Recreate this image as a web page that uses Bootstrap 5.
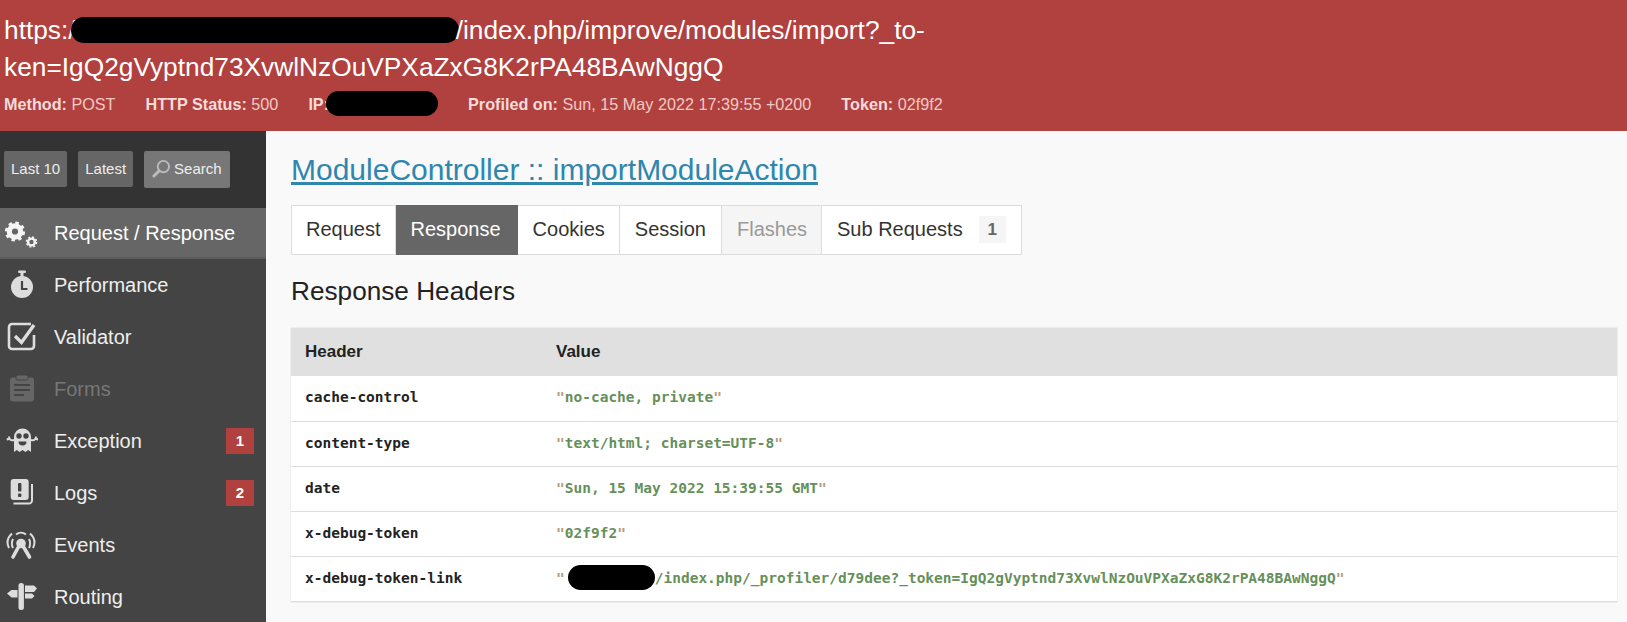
<!DOCTYPE html>
<html lang="en">
<head>
<meta charset="utf-8">
<title>Symfony Profiler</title>
<link href="https://cdn.jsdelivr.net/npm/bootstrap@5.3.0/dist/css/bootstrap.min.css" rel="stylesheet">
<style>
html,body{height:100%;overflow:hidden}
body{font-family:"Liberation Sans",Arial,sans-serif;background:#f9f9f9;color:#222}
.prof-head{background:#b0413e;height:131px;padding:12px 4px 0}
.prof-url{font-size:26.3px;line-height:37px;color:#fff;width:960px;margin:0;font-weight:400}
.prof-meta{font-size:16.2px;line-height:20px;color:#f2c9c7;margin-top:8px;gap:30px}
.prof-meta b{color:#f5dbda}
.blob{display:inline-block;background:#000;border-radius:14px;vertical-align:middle}
.blob-url{width:388px;height:26px;margin:-6px -3px -2px -5px}
.blob-ip{width:112px;height:25px;margin:-4px 0 0 -3px}
.blob-val{width:87px;height:25px;margin:-4px 0 -2px 3px}
.prof-body{height:491px}
.prof-side{width:266px;flex:0 0 266px;background:#444}
.side-top{background:#333;height:77px;padding:20px 4px 0;gap:11px}
.side-btn{background:#666;color:#eee;font-size:15px;line-height:20px;padding:8px 7px;height:36px;border-radius:2px;white-space:nowrap}
.side-btn.find{background:#777;padding:8px 8px;height:37px}
.side-btn svg{vertical-align:-4px;margin-right:3px}
.side-item{height:52px;color:#eee;font-size:20px;padding-left:4px}
.side-item svg{flex:0 0 34px;margin-right:16px}
.side-item.on{background:#666;border-bottom:2px solid #5c5c5c;color:#fff;height:51px}
.side-item.off{color:#777}
.side-num{background:#b0413e;color:#fff;font-weight:700;font-size:15px;width:28px;height:26px;margin:0 12px 0 auto;line-height:26px;text-align:center}
.prof-main{padding:21px 10px 0 25px;min-width:0}
.prof-title{font-size:30px;line-height:36px;font-weight:400;margin:0 0 17px}
.prof-title a{color:#2f86ae}
.tabbar{width:731px;height:50px;background:#fff;border:1px solid #ddd}
.tabbar span{font-size:20px;padding:0 15px;line-height:47px;color:#333;border-right:1px solid #ddd;white-space:nowrap}
.tabbar span.first{padding:0 14px}
.tabbar span.act{background:#666;color:#fff;margin:-1px 0;line-height:49px;height:50px;border-right:0;padding-right:17px}
.tabbar span.cook{padding-right:14px}
.tabbar span.dis{background:#f5f5f5;color:#999;padding-right:14px}
.tabbar span.last{border-right:0;flex:1}
.tabnum{display:inline-block;background:#f5f5f5;color:#666;font-weight:700;font-size:17px;line-height:27px;width:27px;text-align:center;margin-left:16px;vertical-align:1px}
.sect{font-size:26.2px;line-height:30px;font-weight:400;margin:21px 0 22px;color:#222}
.hdr-tbl{box-shadow:0 0 1px rgba(128,128,128,.5);font-size:14.5px}
.hdr-tbl th{background:#e0e0e0;font-size:17px;height:48px;padding:0 14px;vertical-align:middle;border:0;color:#222}
.hdr-tbl td{background:#fff;height:45px;padding:0 14px;vertical-align:middle;border-bottom:1px solid #ddd;font-family:"DejaVu Sans Mono","Liberation Mono",monospace;font-weight:700;white-space:nowrap;color:#222}
.hdr-tbl .k{width:251px}
.hdr-tbl td.v{color:#66905a}
.q{color:#b89a78}
</style>
</head>
<body>
<header class="prof-head">
  <h1 class="prof-url">https:/<span class="blob blob-url"></span>/index.php/improve/modules/import?_to-<br>ken=IgQ2gVyptnd73XvwlNzOuVPXaZxG8K2rPA48BAwNggQ</h1>
  <div class="prof-meta d-flex">
    <span><b>Method:</b> POST</span>
    <span><b>HTTP Status:</b> 500</span>
    <span><b>IP:</b><span class="blob blob-ip"></span></span>
    <span><b>Profiled on:</b> Sun, 15 May 2022 17:39:55 +0200</span>
    <span><b>Token:</b> 02f9f2</span>
  </div>
</header>
<div class="prof-body d-flex">
  <aside class="prof-side">
    <div class="side-top d-flex">
      <span class="side-btn">Last 10</span>
      <span class="side-btn">Latest</span>
      <span class="side-btn find"><svg width="19" height="19" viewBox="0 0 20 20" fill="none" stroke="#bbb" stroke-width="2"><circle cx="12" cy="8" r="6"/><path d="M7.500 12.500 2 18" stroke-width="3" stroke-linecap="round"/></svg>Search</span>
    </div>
    <div class="side-item on d-flex align-items-center">
      <svg width="34" height="34" viewBox="0 0 34 34" fill="none" stroke="#f5f5f5"><circle cx="11" cy="15.500" r="5.700" stroke-width="5.200"/><circle cx="11" cy="15.500" r="8.800" stroke-width="2.600" stroke-dasharray="3.460 3.460"/><circle cx="27.500" cy="26" r="3.400" stroke-width="2.400"/><circle cx="27.500" cy="26" r="5.100" stroke-width="1.400" stroke-dasharray="2 2"/></svg>
      Request / Response</div>
    <div class="side-item d-flex align-items-center">
      <svg width="34" height="34" viewBox="0 0 34 34"><circle cx="18" cy="19" r="11" fill="#ddd"/><rect x="14" y="2.500" width="8" height="2.600" rx="1.300" fill="#ddd"/><rect x="16.500" y="5" width="3" height="4" fill="#ddd"/><path d="M18 13v8h5.500" fill="none" stroke="#444" stroke-width="2.200"/></svg>
      Performance</div>
    <div class="side-item d-flex align-items-center">
      <svg width="34" height="34" viewBox="0 0 34 34" fill="none" stroke="#ddd"><path d="M27 4H8a3 3 0 0 0-3 3v19a3 3 0 0 0 3 3h19a3 3 0 0 0 3-3V15" stroke-width="2.600"/><path d="m11 16 6.500 6.500L30 5" stroke-width="3.400"/></svg>
      Validator</div>
    <div class="side-item off d-flex align-items-center">
      <svg width="34" height="34" viewBox="0 0 34 34"><rect x="6" y="5.500" width="24" height="24" rx="3" fill="#666"/><rect x="12" y="3" width="12" height="5" rx="1.500" fill="#666" stroke="#444"/><path d="M10 13h16M10 18h16M10 23h10" stroke="#444" stroke-width="2"/></svg>
      Forms</div>
    <div class="side-item d-flex align-items-center">
      <svg width="34" height="34" viewBox="0 0 34 34"><path d="M10 13a8.500 8.500 0 0 1 17 0v15l-2.800-2-2.800 2-2.900-2-2.900 2-2.800-2-2.800 2z" fill="#ddd"/><path d="M10 16c-3 1-5-.5-5-3.500M4.500 16 3 14.500M27 16c3 1 5-.5 5-3.500M32.500 16l1.500-1.500" fill="none" stroke="#ddd" stroke-width="2"/><circle cx="15" cy="12" r="2.700" fill="#444"/><circle cx="22" cy="12" r="2.700" fill="#444"/><path d="M14.500 17.500h8a4 4 0 0 1-8 0" fill="#444"/></svg>
      Exception<span class="side-num">1</span></div>
    <div class="side-item d-flex align-items-center">
      <svg width="34" height="34" viewBox="0 0 34 34"><rect x="6.700" y="3" width="18" height="21" rx="3" fill="#ddd"/><rect x="14" y="7" width="3.400" height="8.500" rx="1" fill="#444"/><rect x="14" y="17.500" width="3.400" height="3.400" rx="1" fill="#444"/><path d="M9.500 27.500H25a3 3 0 0 0 3-3V8" fill="none" stroke="#ddd" stroke-width="2"/></svg>
      Logs<span class="side-num">2</span></div>
    <div class="side-item d-flex align-items-center">
      <svg width="34" height="34" viewBox="0 0 34 34" fill="none" stroke="#ddd"><circle cx="17" cy="15.500" r="4.800" fill="#ddd" stroke="none"/><path d="m15 18-6 11M19 18l6.500 11" stroke-width="3.600" stroke-linecap="round"/><path d="M9 20a10 10 0 0 1 0-9M25 20a10 10 0 0 0 0-9" stroke-width="2"/><path d="M5 20C2.500 15 3.500 9.500 8 5.500M29 20C31.500 15 30.500 9.500 26 5.500" stroke-width="2"/><path d="M12 6.500a8 8 0 0 1 10 0" stroke-width="2"/></svg>
      Events</div>
    <div class="side-item d-flex align-items-center">
      <svg width="34" height="34" viewBox="0 0 34 34" fill="#ddd"><rect x="14.500" y="3" width="5.400" height="27" rx="2.500"/><path d="M13.500 10H7.500L3 13.500 7.500 17.500h6z"/><path d="M21 5.500h9l3 3-3 3.500h-9z"/><path d="M21 13.500h7l2.500 2.500-2.500 2.500h-7z"/></svg>
      Routing</div>
  </aside>
  <main class="prof-main flex-grow-1">
    <h2 class="prof-title"><a href="#">ModuleController :: importModuleAction</a></h2>
    <div class="tabbar d-flex">
      <span class="first">Request</span><span class="act">Response</span><span class="cook">Cookies</span><span>Session</span><span class="dis">Flashes</span><span class="last">Sub Requests<b class="tabnum">1</b></span>
    </div>
    <h3 class="sect">Response Headers</h3>
    <table class="table hdr-tbl mb-0">
      <thead><tr><th class="k">Header</th><th>Value</th></tr></thead>
      <tbody>
        <tr><td class="k">cache-control</td><td class="v"><span class="q">"</span>no-cache, private<span class="q">"</span></td></tr>
        <tr><td class="k">content-type</td><td class="v"><span class="q">"</span>text/html; charset=UTF-8<span class="q">"</span></td></tr>
        <tr><td class="k">date</td><td class="v"><span class="q">"</span>Sun, 15 May 2022 15:39:55 GMT<span class="q">"</span></td></tr>
        <tr><td class="k">x-debug-token</td><td class="v"><span class="q">"</span>02f9f2<span class="q">"</span></td></tr>
        <tr><td class="k">x-debug-token-link</td><td class="v"><span class="q">"</span><span class="blob blob-val"></span>/index.php/_profiler/d79dee?_token=IgQ2gVyptnd73XvwlNzOuVPXaZxG8K2rPA48BAwNggQ<span class="q">"</span></td></tr>
      </tbody>
    </table>
  </main>
</div>
<script src="https://cdn.jsdelivr.net/npm/bootstrap@5.3.0/dist/js/bootstrap.bundle.min.js"></script>
</body>
</html>
